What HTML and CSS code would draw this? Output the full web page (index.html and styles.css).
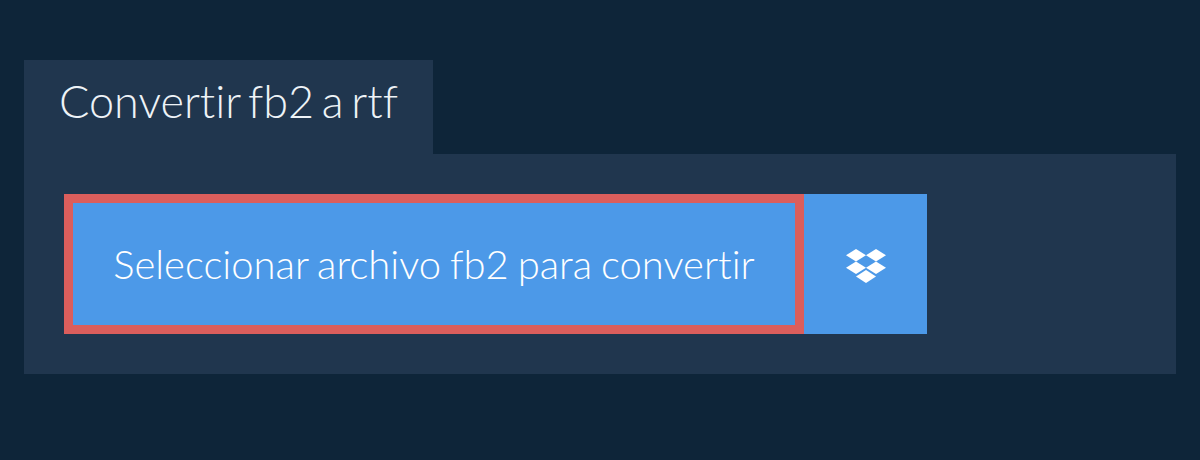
FILE: index.html
```html
<!DOCTYPE html>
<html lang="es">

<head>
    <meta charset="UTF-8" />
    <title>Convertir fb2 a rtf</title>
    <link rel="stylesheet" href="styles.css">
</head>

<body>
    <div class="main">
        <div class="tab">Convertir fb2 a rtf</div>
        <div class="panel">
            <div class="picker">
                <div class="select-file">Seleccionar archivo fb2 para convertir</div>
                <div class="dropbox">
                    <svg class="dropbox-icon" width="40" height="34" viewBox="0 0 40 34" fill="#fff">
                        <path d="M10 0 0 6.250 10 12.500l10-6.250z" />
                        <path d="M30 0 20 6.250 30 12.500l10-6.250z" />
                        <path d="M0 18.750 10 25l10-6.250L10 12.500z" />
                        <path d="M30 12.500 20 18.750 30 25l10-6.250z" />
                        <path d="M10 27.500 20 34l10-6.500L20 21z" />
                    </svg>
                </div>
            </div>
        </div>
    </div>
</body>

</html>
```
FILE: styles.css
```css
html,
body {
    margin: 0;
    height: 100%;
}

body {
    font-family: Lato, "Liberation Sans", sans-serif;
    font-variant-ligatures: none;
    background-color: #0e2539;
}

.main {
    padding: 60px 24px 0;
}

.tab {
    width: 409px;
    height: 94px;
    box-sizing: border-box;
    padding: 14px 35px 0;
    font-size: 45px;
    font-weight: 300;
    line-height: 54px;
    word-spacing: -4.5px;
    white-space: nowrap;
    color: #eef3f7;
    background-color: #20364e;
}

.panel {
    padding: 40px;
    background-color: #20364e;
}

.picker {
    display: flex;
    height: 140px;
}

.select-file {
    width: 740px;
    box-sizing: border-box;
    border: 9px solid #db5e5c;
    font-size: 40px;
    font-weight: 300;
    line-height: 122px;
    word-spacing: -2px;
    text-align: center;
    color: #fff;
    background-color: #4c99e8;
}

.dropbox {
    width: 123px;
    display: flex;
    align-items: center;
    justify-content: center;
    background-color: #4c99e8;
}

.dropbox-icon {
    margin-top: 4px;
}
```
